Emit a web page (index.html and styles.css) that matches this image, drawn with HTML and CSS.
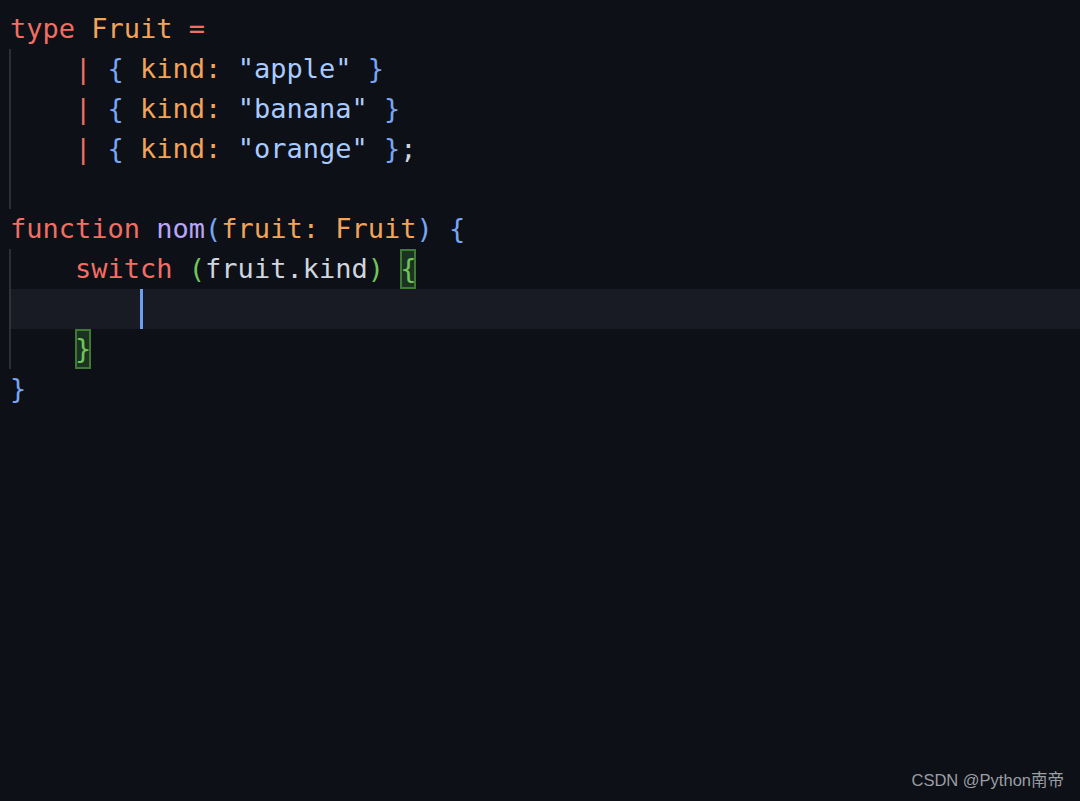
FILE: index.html
```html
<!DOCTYPE html>
<html lang="en">
<head>
<meta charset="utf-8">
<title>Fruit</title>
<link rel="stylesheet" href="styles.css">
</head>
<body>
<div class="page">
  <div class="editor">
    <div class="line"><span class="kw">type</span> <span class="ty">Fruit</span> <span class="kw">=</span></div>
    <div class="line guide">    <span class="kw">|</span> <span class="br">{</span> <span class="prop">kind:</span> <span class="str">"apple"</span> <span class="br">}</span></div>
    <div class="line guide">    <span class="kw">|</span> <span class="br">{</span> <span class="prop">kind:</span> <span class="str">"banana"</span> <span class="br">}</span></div>
    <div class="line guide">    <span class="kw">|</span> <span class="br">{</span> <span class="prop">kind:</span> <span class="str">"orange"</span> <span class="br">}</span><span class="punc">;</span></div>
    <div class="line guide"> </div>
    <div class="line"><span class="kw">function</span> <span class="fn">nom</span><span class="br">(</span><span class="prop">fruit: Fruit</span><span class="br">)</span> <span class="br">{</span></div>
    <div class="line guide">    <span class="kw">switch</span> <span class="gp">(</span><span class="var">fruit.kind</span><span class="gp">)</span> <span class="match">{</span></div>
    <div class="line guide current">        <span class="cursor"></span></div>
    <div class="line guide">    <span class="match">}</span></div>
    <div class="line"><span class="br">}</span></div>
  </div>
  <div class="footer">CSDN @Python南帝</div>
</div>
</body>
</html>
```

FILE: styles.css
```css
html, body {
  margin: 0;
  padding: 0;
  background: #0d1017;
}

.page {
  width: 1080px;
  height: 801px;
  display: flex;
  flex-direction: column;
  background: #0d1017;
  overflow: hidden;
}

.editor {
  flex: 1;
  padding-top: 9px;
  font-family: "DejaVu Sans Mono", "Liberation Mono", monospace;
  font-size: 27px;
  color: #cfd6df;
}

.line {
  height: 40px;
  line-height: 40px;
  padding-left: 10px;
  white-space: pre;
}

.guide {
  background: linear-gradient(to right, transparent 9px, #2a2e36 9px, #2a2e36 11px, transparent 11px);
}

.current {
  background: linear-gradient(to right, transparent 9px, #2e323b 9px, #2e323b 11px, #181b23 11px);
}

.kw { color: #f26e63; }
.ty { color: #f3a45a; }
.prop { color: #f3a45a; }
.str { color: #a9cbfd; }
.br { color: #78a6f4; }
.fn { color: #b9a6f7; }
.gp { color: #72c55a; }
.var { color: #cfd6df; }
.punc { color: #cfd6df; }

.match {
  display: inline-block;
  height: 40px;
  vertical-align: top;
  color: #72c55a;
  background: #1c3321;
  box-shadow: inset 0 0 0 2px #3f7a34;
}

.cursor {
  display: inline-block;
  width: 3px;
  height: 40px;
  vertical-align: top;
  background: #6a9ff2;
}

.footer {
  height: 31px;
  padding-right: 16px;
  text-align: right;
  font-family: "Liberation Sans", "Noto Sans CJK SC", sans-serif;
  font-size: 16.5px;
  line-height: 20px;
  color: #9b9ea3;
}
```
